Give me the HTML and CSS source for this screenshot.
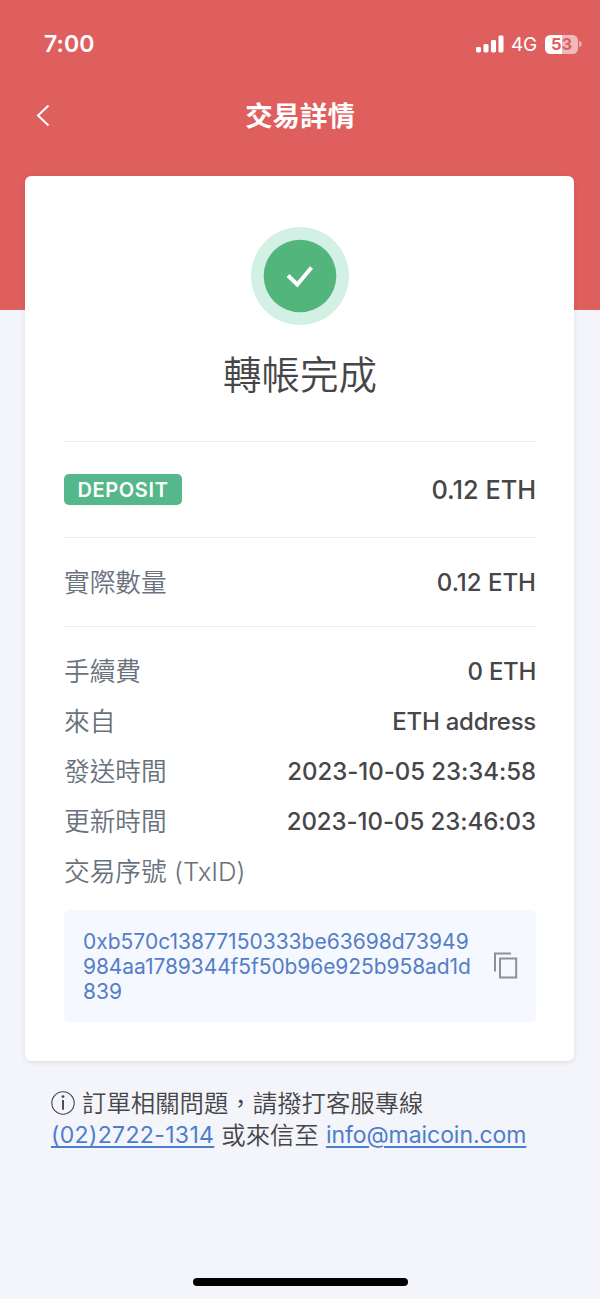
FILE: index.html
```
<!DOCTYPE html>
<html lang="zh-Hant">
<head>
<meta charset="utf-8">
<title>交易詳情</title>
<link rel="stylesheet" href="styles.css">
</head>
<body>
<div class="screen">
  <div class="status">
    <span class="time">7:00</span>
    <div class="indicators">
      <svg class="signal" width="28" height="18" viewBox="0 0 28 18" fill="#fff"><rect x="0" y="12" width="5" height="5.5" rx="1.4"/><rect x="7.5" y="9" width="5" height="8.5" rx="1.4"/><rect x="15" y="5" width="5" height="12.5" rx="1.4"/><rect x="22.5" y="0.5" width="5" height="17" rx="1.4"/></svg>
      <span class="network">4G</span>
      <span class="battery">53</span>
      <svg class="battery-cap" width="3" height="8" viewBox="0 0 3 8"><path d="M0 0.5Q3 1.8 3 4T0 7.5Z" fill="#eea9a9"/></svg>
    </div>
  </div>
  <header class="navbar">
    <svg class="back" width="14" height="22" viewBox="0 0 14 22" fill="none" stroke="#fff" stroke-width="2"><path d="M12.5 0.5L2 10.5L12.5 20.5"/></svg>
    <h1 class="title">交易詳情</h1>
  </header>
  <main class="card">
    <svg class="badge" width="98" height="98" viewBox="0 0 98 98"><circle cx="49" cy="49" r="49" fill="#d3f0e4"/><circle cx="49" cy="49" r="36.3" fill="#52b57c"/><path d="M37 48.5L46.3 57.5L60.5 40.5" fill="none" stroke="#fff" stroke-width="4"/></svg>
    <h2 class="result">轉帳完成</h2>
    <div class="row row-type"><span class="tag">DEPOSIT</span><span class="value value-large">0.12 ETH</span></div>
    <div class="row row-amount"><span class="label">實際數量</span><span class="value">0.12 ETH</span></div>
    <div class="details">
      <div class="line"><span class="label">手續費</span><span class="value zero">0 ETH</span></div>
      <div class="line"><span class="label">來自</span><span class="value address">ETH address</span></div>
      <div class="line"><span class="label">發送時間</span><span class="value date">2023-10-05 23:34:58</span></div>
      <div class="line"><span class="label">更新時間</span><span class="value date">2023-10-05 23:46:03</span></div>
      <div class="line"><span class="label">交易序號 (TxID)</span></div>
    </div>
    <div class="txid">
      <p class="hash">0xb570c13877150333be63698d73949<br><span class="hash-middle">984aa1789344f5f50b96e925b958ad1d</span><br>839</p>
      <svg class="copy" width="24" height="27" viewBox="0 0 24 27" fill="none" stroke="#8f9092" stroke-width="2"><path d="M1 19.5V1.5H17M6 6.5H22.2V25.5H6Z"/></svg>
    </div>
  </main>
  <footer class="help">
    <div class="help-line"><svg class="info" width="24" height="24" viewBox="0 0 24 24"><circle cx="12" cy="12" r="11.2" fill="none" stroke="#464648" stroke-width="1.1"/><circle cx="12" cy="5.6" r="1.4" fill="#464648"/><path d="M12 9V18.8" fill="none" stroke="#464648" stroke-width="1.9"/></svg><span class="question">訂單相關問題，請撥打客服專線</span></div>
    <div class="help-line"><a class="link phone">(02)2722-1314</a><span class="or">或來信至</span><a class="link mail">info@maicoin.com</a></div>
  </footer>
  <div class="home"></div>
</div>
</body>
</html>
```
FILE: styles.css
```
* { box-sizing: border-box; }
body { margin: 0; }
.screen {
  width: 600px; height: 1299px; display: flex; flex-direction: column;
  background: linear-gradient(#df5f5e 310px, #f4f5fa 310px);
  font-family: Inter, "Noto Sans CJK TC", sans-serif; color: #464648;
}
.status { height: 88px; padding: 0 18px 0 44px; display: flex; align-items: center; justify-content: space-between; color: #fff; }
.time { font-size: 23px; font-weight: 600; letter-spacing: 0.1px; }
.indicators { display: flex; align-items: center; }
.network { margin-left: 7px; padding-top: 1px; font-size: 19px; line-height: 20px; width: 27px; letter-spacing: -0.3px; }
.battery { margin-left: 7px; width: 33px; height: 19px; border-radius: 5.5px; background: linear-gradient(90deg, #fff 52%, #f2b9b9 52%); color: #df5f5e; font-size: 16.5px; line-height: 19px; font-weight: 700; text-align: center; }
.battery-cap { margin-left: 1px; }
.navbar { height: 54px; padding: 2px 36px 0; display: grid; grid-template-columns: 14px 1fr 14px; align-items: center; }
.title { margin: 0; text-align: center; font-size: 27.4px; line-height: 40px; font-weight: 700; color: #fff; }
.card { margin: 34px 26px 0 25px; height: 884.5px; padding: 51px 38px 0 39px; background: #fff; border-radius: 6px; box-shadow: 0 1px 5px rgba(40,40,70,.12); display: flex; flex-direction: column; }
.badge { align-self: center; flex: none; }
.result { margin: 21px 0 0; height: 95px; text-align: center; font-size: 38.5px; line-height: 58px; font-weight: 350; }
.row { display: flex; align-items: center; justify-content: space-between; border-top: 1px solid #e9eaec; }
.row-type { height: 96px; }
.row-amount { height: 89px; padding-top: 1px; }
.tag { width: 118px; height: 31px; border-radius: 5px; background: #55b88a; color: #fff; font-size: 20px; line-height: 32px; font-weight: 600; letter-spacing: 0.65px; text-align: center; }
.label { font-size: 25.7px; line-height: 38px; font-weight: 350; color: #69727c; }
.value { font-size: 24px; line-height: 32px; font-weight: 500; }
.value-large { font-size: 25.3px; }
.zero { letter-spacing: -0.3px; }
.address { letter-spacing: -0.25px; }
.date { letter-spacing: -0.05px; }
.details { border-top: 1px solid #e9eaec; padding-top: 20px; }
.line { height: 50.1px; display: flex; align-items: center; justify-content: space-between; }
.txid { margin-top: 12.5px; height: 112px; padding: 0 18px 0 19px; display: flex; align-items: center; justify-content: space-between; background: #f5f8fe; border-radius: 5px; }
.hash { margin: 0; padding-top: 2px; font-size: 21px; line-height: 25px; color: #547ec6; white-space: nowrap; }
.hash-middle { letter-spacing: -0.08px; }
.copy { flex: none; }
.help { padding: 26px 51px 0; }
.help-line { height: 32.5px; display: flex; align-items: center; font-size: 24.4px; line-height: 32px; white-space: nowrap; font-weight: 350; }
.question { margin-left: 7px; }
.or { margin: 0 7px; }
.link { font-weight: 400; color: #4d7ecb; text-decoration: underline; text-decoration-thickness: 1.5px; text-underline-offset: 3px; font-size: 23px; }
.phone { letter-spacing: 0.35px; }
.mail { letter-spacing: -0.06px; }
.home { width: 215px; height: 8px; margin: auto auto 13px; border-radius: 4px; background: #000; }
```
